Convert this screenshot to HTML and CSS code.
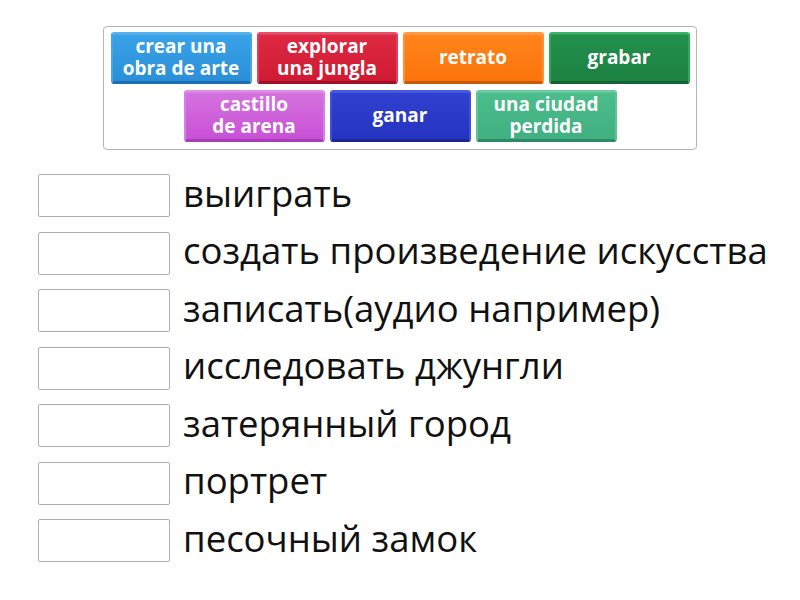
FILE: index.html
```html
<!DOCTYPE html>
<html lang="es">
<head>
<meta charset="utf-8">
<title>Match</title>
<link rel="stylesheet" href="styles.css">
</head>
<body>
<div class="bank">
  <div class="tile blue">crear una<br>obra de arte</div>
  <div class="tile red">explorar<br>una jungla</div>
  <div class="tile orange">retrato</div>
  <div class="tile green">grabar</div>
  <div class="tile purple">castillo<br>de arena</div>
  <div class="tile navy">ganar</div>
  <div class="tile teal">una ciudad<br>perdida</div>
</div>
<div class="list">
  <div class="row"><div class="slot"></div><div class="label">выиграть</div></div>
  <div class="row"><div class="slot"></div><div class="label">создать произведение искусства</div></div>
  <div class="row"><div class="slot"></div><div class="label">записать(аудио например)</div></div>
  <div class="row"><div class="slot"></div><div class="label">исследовать джунгли</div></div>
  <div class="row"><div class="slot"></div><div class="label">затерянный город</div></div>
  <div class="row"><div class="slot"></div><div class="label">портрет</div></div>
  <div class="row"><div class="slot"></div><div class="label">песочный замок</div></div>
</div>
</body>
</html>
```
FILE: styles.css
```css
html, body {
  margin: 0;
  padding: 0;
  background: #fff;
  font-family: "Open Sans", "Noto Sans", sans-serif;
}
.bank {
  box-sizing: border-box;
  width: 594px;
  margin: 26px auto 0;
  padding: 5px 6px 7px;
  border: 1px solid #b5b5b5;
  border-radius: 4px;
  display: flex;
  flex-wrap: wrap;
  justify-content: center;
  gap: 6px 5px;
}
.tile {
  box-sizing: border-box;
  width: 141px;
  height: 52px;
  border-radius: 3px;
  display: flex;
  align-items: center;
  justify-content: center;
  text-align: center;
  color: #fff;
  font-weight: 700;
  font-size: 19px;
  line-height: 22px;
  padding-bottom: 1px;
  border: 2px solid rgba(255,255,255,0.18);
  border-bottom: 3px solid rgba(0,0,0,0.22);
  background-clip: padding-box;
  box-shadow: inset 0 1px 0 rgba(255,255,255,0.12);
}
.blue   { background-color: #2b94dc; background-image: linear-gradient(#3aa3e8, #2a8fd8); border-color: #56b2ec #47a6e6 #1b6fb0; }
.red    { background-color: #d41c35; background-image: linear-gradient(#dd2a42, #cf1a32); border-color: #e4506a #df4058 #a0102a; }
.orange { background-color: #ff7b10; background-image: linear-gradient(#ff851c, #fb740a); border-color: #ff9b46 #ff903a #c85a00; }
.green  { background-color: #1e8a47; background-image: linear-gradient(#22904c, #1c8242); border-color: #36b462 #30a858 #156434; }
.purple { background-color: #cd5ad9; background-image: linear-gradient(#d572df, #c851d6); border-color: #de8ee6 #d780e2 #a93cb8; }
.navy   { background-color: #2a39c8; background-image: linear-gradient(#3040d0, #2534c0); border-color: #4a5ae0 #4050da #1a2596; }
.teal   { background-color: #45b787; background-image: linear-gradient(#4cbd8d, #40b080); border-color: #6ccaa0 #60c498 #2e8c64; }

.list {
  margin: 24px 0 0 38px;
  display: flex;
  flex-direction: column;
  gap: 14.5px;
}
.row {
  display: flex;
  align-items: center;
  gap: 13px;
}
.slot {
  box-sizing: border-box;
  width: 132px;
  height: 43px;
  border: 1px solid #b0b0b0;
  border-radius: 2px;
  flex: none;
}
.label {
  font-size: 36.5px;
  color: #111;
  white-space: nowrap;
  line-height: 43px;
  margin-top: -5px;
}
```
